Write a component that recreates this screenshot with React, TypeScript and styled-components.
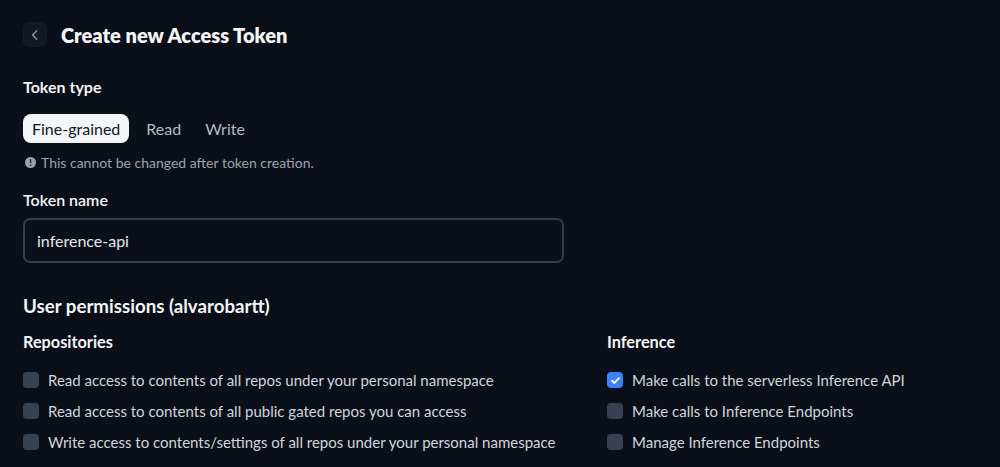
import React, { useState } from 'react'
import styled, { createGlobalStyle } from 'styled-components'

const GlobalStyle = createGlobalStyle`
  html, body {
    margin: 0;
    padding: 0;
    background: #0b0f19;
  }
  body {
    font-family: Lato, "Noto Sans", sans-serif;
    color: #e5e7eb;
    -webkit-font-smoothing: antialiased;
  }
`

const Page = styled.div`
  padding: 22px 23px 0;
  min-height: 467px;
  box-sizing: border-box;
  background: #0b0f19;
`

const Header = styled.div`
  display: flex;
  align-items: center;
  gap: 14px;
  height: 25px;
`

const BackButton = styled.button`
  width: 24px;
  height: 25px;
  border-radius: 6px;
  border: 1px solid #161b27;
  background: #131826;
  color: #9ca3af;
  display: flex;
  align-items: center;
  justify-content: center;
  padding: 0;
`

const Title = styled.h1`
  margin: 0;
  font-size: 20px;
  font-weight: 800;
  color: #f3f4f6;
`

const Label = styled.h3<{ $top: number; $size?: number; $weight?: number }>`
  margin: ${(p) => p.$top}px 0 0;
  font-size: ${(p) => p.$size ?? 16}px;
  font-weight: ${(p) => p.$weight ?? 700};
  color: #f3f4f6;
  line-height: 20px;
`

const Tabs = styled.div`
  display: flex;
  align-items: center;
  margin-top: 17px;
  gap: 2px;
`

const Tab = styled.button<{ $active?: boolean }>`
  height: 29px;
  padding: 0 ${(p) => (p.$active ? 9 : 11)}px;
  border: none;
  border-radius: 8px;
  font-family: inherit;
  font-size: 16px;
  background: ${(p) => (p.$active ? '#f3f4f6' : 'transparent')};
  color: ${(p) => (p.$active ? '#111827' : '#b5bac3')};
  margin-right: ${(p) => (p.$active ? '4px' : '0')};
`

const Hint = styled.div`
  display: flex;
  align-items: center;
  gap: 5px;
  margin-top: 11px;
  margin-left: 2px;
  font-size: 14px;
  color: #9ca3af;
  height: 16px;
`

const InfoDot = styled.span`
  width: 11px;
  height: 11px;
  border-radius: 50%;
  background: #9ca3af;
  color: #0b0f19;
  font-size: 9px;
  font-weight: 900;
  display: flex;
  align-items: center;
  justify-content: center;
`

const Input = styled.input`
  display: block;
  margin-top: 8px;
  width: 541px;
  height: 45px;
  box-sizing: border-box;
  border: 2px solid #353c4a;
  border-radius: 7px;
  background: #0b0f19;
  color: #e5e7eb;
  font-family: inherit;
  font-size: 16px;
  padding: 0 12px;
  outline: none;
`

const Columns = styled.div`
  display: grid;
  grid-template-columns: 584px 1fr;
  margin-top: 16px;
`

const Column = styled.div`
  display: flex;
  flex-direction: column;
`

const List = styled.div`
  display: flex;
  flex-direction: column;
  gap: 15px;
  margin-top: 20px;
`

const Row = styled.label`
  display: flex;
  align-items: center;
  gap: 9px;
  font-size: 15px;
  color: #d1d5db;
  height: 16px;
`

const Box = styled.span<{ $checked?: boolean }>`
  width: 16px;
  height: 16px;
  border-radius: 4px;
  flex-shrink: 0;
  background: ${(p) => (p.$checked ? '#3b82f6' : '#374151')};
  display: flex;
  align-items: center;
  justify-content: center;
`

const ChevronLeft = () => (
  <svg width="12" height="12" viewBox="0 0 12 12" fill="none">
    <path d="M7.8 1.6 3.6 6l4.2 4.4" stroke="currentColor" strokeWidth="1.2" strokeLinecap="round" strokeLinejoin="round" />
  </svg>
)

const Check = () => (
  <svg width="11" height="11" viewBox="0 0 12 12" fill="none">
    <path d="M2.3 6.3 4.8 8.7 9.8 3.4" stroke="#fff" strokeWidth="2" strokeLinecap="round" strokeLinejoin="round" />
  </svg>
)

type Perm = { label: string; checked?: boolean }

const repoPerms: Perm[] = [
  { label: 'Read access to contents of all repos under your personal namespace' },
  { label: 'Read access to contents of all public gated repos you can access' },
  { label: 'Write access to contents/settings of all repos under your personal namespace' },
]

const inferencePerms: Perm[] = [
  { label: 'Make calls to the serverless Inference API', checked: true },
  { label: 'Make calls to Inference Endpoints' },
  { label: 'Manage Inference Endpoints' },
]

const PermList = ({ items }: { items: Perm[] }) => (
  <List>
    {items.map((item) => (
      <Row key={item.label}>
        <Box $checked={item.checked}>{item.checked && <Check />}</Box>
        {item.label}
      </Row>
    ))}
  </List>
)

const App = () => {
  const [tokenType, setTokenType] = useState('Fine-grained')
  const [name, setName] = useState('inference-api')

  return (
    <Page>
      <GlobalStyle />
      <Header>
        <BackButton>
          <ChevronLeft />
        </BackButton>
        <Title>Create new Access Token</Title>
      </Header>

      <Label $top={30}>Token type</Label>
      <Tabs>
        {['Fine-grained', 'Read', 'Write'].map((t) => (
          <Tab key={t} $active={tokenType === t} onClick={() => setTokenType(t)}>
            {t}
          </Tab>
        ))}
      </Tabs>
      <Hint>
        <InfoDot>!</InfoDot>
        This cannot be changed after token creation.
      </Hint>

      <Label $top={20} $weight={600}>Token name</Label>
      <Input value={name} onChange={(e) => setName(e.target.value)} />

      <Label $top={33} $size={18.7}>User permissions (alvarobartt)</Label>
      <Columns>
        <Column>
          <Label $top={0} $size={16.3}>Repositories</Label>
          <PermList items={repoPerms} />
        </Column>
        <Column>
          <Label $top={0} $size={16.3}>Inference</Label>
          <PermList items={inferencePerms} />
        </Column>
      </Columns>
    </Page>
  )
}

export default App
